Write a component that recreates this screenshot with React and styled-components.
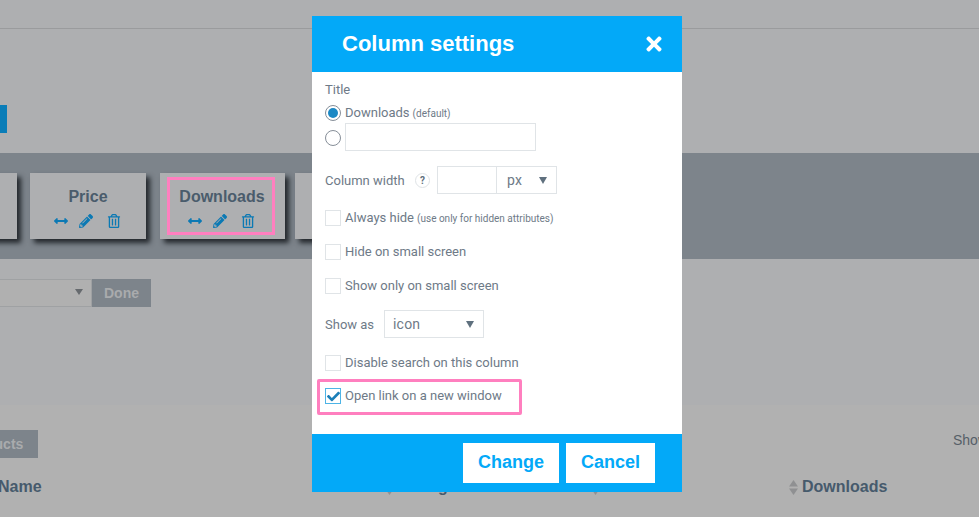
import React from 'react'
import styled, { createGlobalStyle } from 'styled-components'
import { FaArrowsAltH, FaPencilAlt, FaRegTrashAlt, FaTimes, FaCheck } from 'react-icons/fa'

const GlobalStyle = createGlobalStyle`
  html, body {
    margin: 0;
    padding: 0;
    background: #aeafb1;
  }
  * {
    box-sizing: border-box;
  }
`

const Page = styled.div`
  position: relative;
  width: 979px;
  height: 517px;
  overflow: hidden;
  background: #aeafb1;
  font-family: "Liberation Sans", Arial, sans-serif;
`

const TopBar = styled.div`
  height: 29px;
  border-bottom: 1px solid #9a9b9d;
`

const ActionRow = styled.div`
  height: 124px;
  padding-top: 76px;
`

const BlueTab = styled.div`
  width: 7px;
  height: 28px;
  background: #0a7db8;
`

const Band = styled.div`
  display: flex;
  height: 106px;
  padding: 20px 0;
  background: #7d848b;
`

const Card = styled.div`
  flex: none;
  width: ${p => p.$width}px;
  margin-left: ${p => p.$offset}px;
  height: 66px;
  padding: 4px 7px;
  background: #aeafb1;
  box-shadow: 4px 4px 5px rgba(20, 24, 28, 0.85);
`

const CardInner = styled.div`
  width: ${p => (p.$marked ? '108px' : '100%')};
  height: 58px;
  padding-top: ${p => (p.$marked ? 5 : 8)}px;
  padding-left: ${p => (p.$marked ? 2 : 0)}px;
  border: ${p => (p.$marked ? '3px solid #ff7fbf' : 'none')};
  text-align: center;
`

const CardTitle = styled.div`
  font-size: 16px;
  font-weight: bold;
  line-height: 24px;
  color: #4a5c6c;
`

const CardIcons = styled.div`
  display: flex;
  justify-content: center;
  align-items: center;
  gap: 11px;
  height: 16px;
  margin: 4px 2px 0 0;
  color: #0b79b4;
  font-size: 14px;

  svg:last-child {
    margin-left: 3px;
  }
`

const DoneRow = styled.div`
  display: flex;
  height: 146px;
  padding-top: 20px;
`

const DimSelect = styled.div`
  position: relative;
  width: 92px;
  height: 28px;
  background: #b0b0b0;
  border: 1px solid #9fa1a3;
  border-left: none;
`

const DimCaret = styled.span`
  position: absolute;
  right: 8px;
  top: 9px;
  width: 0;
  height: 0;
  border-left: 4px solid transparent;
  border-right: 4px solid transparent;
  border-top: 6px solid #666a6e;
`

const DimButton = styled.div`
  display: flex;
  align-items: center;
  justify-content: center;
  flex: none;
  width: ${p => p.$width}px;
  height: 28px;
  margin-left: ${p => p.$offset || 0}px;
  background: #7d848b;
  color: #a9abad;
  font-size: 14px;
  font-weight: bold;
`

const Lower = styled.div`
  height: 112px;
  padding-top: 25px;
  background: #b1b1b1;
`

const Toolbar = styled.div`
  display: flex;
  justify-content: space-between;
  height: 28px;
`

const ShowLabel = styled.div`
  flex: none;
  width: 26px;
  overflow: hidden;
  font-size: 14px;
  line-height: 20px;
  color: #565f68;
`

const HeadRow = styled.div`
  display: grid;
  grid-template-columns: 385px 206px 198px 1fr;
  height: 48px;
  margin-top: 20px;
  border-bottom: 2px solid #939b9a;
`

const HeadCell = styled.div`
  display: flex;
  align-items: flex-start;
  gap: 4px;
  height: 18px;
  margin-left: ${p => p.$offset || 0}px;
  font-size: 16px;
  font-weight: bold;
  line-height: 18px;
  color: #465a6c;
`

const Sort = styled.svg`
  flex: none;
  width: 9px;
  height: 15px;
  margin-top: 2px;
  fill: #8f9092;
`

const Modal = styled.div`
  position: absolute;
  left: 312px;
  top: 16px;
  display: flex;
  flex-direction: column;
  width: 370px;
  height: 476px;
  background: #fff;
  font-family: Roboto, "Liberation Sans", sans-serif;
  font-size: 13px;
  color: #6e7a87;
`

const ModalHeader = styled.div`
  display: flex;
  align-items: center;
  justify-content: space-between;
  flex: none;
  height: 56px;
  padding: 0 17px 0 30px;
  background: #03a9f8;
  color: #fff;
`

const ModalTitle = styled.div`
  font-family: "Liberation Sans", Arial, sans-serif;
  font-size: 22px;
  font-weight: bold;
`

const CloseIcon = styled(FaTimes)`
  font-size: 22px;
`

const ModalBody = styled.div`
  flex: 1;
  padding: 9px 13px 0;
`

const FieldTitle = styled.div`
  height: 17px;
  line-height: 17px;
`

const RadioRow = styled.div`
  display: flex;
  align-items: center;
  gap: 4px;
  height: ${p => p.$height}px;
  margin-top: ${p => p.$top}px;
`

const Radio = styled.span`
  display: flex;
  align-items: center;
  justify-content: center;
  flex: none;
  width: 16px;
  height: 16px;
  margin-top: ${p => (p.$low ? 2 : 0)}px;
  border: 1px solid #868e98;
  border-radius: 50%;

  &::after {
    content: '';
    display: ${p => (p.$checked ? 'block' : 'none')};
    width: 10px;
    height: 10px;
    border-radius: 50%;
    background: #1c88c4;
  }
`

// the option text sits a pixel above the middle of its box
const OptionText = styled.span`
  margin-top: -2px;
`

const Small = styled.span`
  margin-left: 3px;
  font-size: 10px;
`

const TextInput = styled.div`
  flex: none;
  width: ${p => p.$width}px;
  height: 28px;
  border: 1px solid #e0e4e7;
`

const WidthRow = styled.div`
  display: flex;
  align-items: center;
  height: 28px;
  margin-top: 15px;
`

const RowLabel = styled.span`
  flex: none;
  width: ${p => p.$width}px;
`

const Help = styled.span`
  display: flex;
  align-items: center;
  justify-content: center;
  flex: none;
  width: 15px;
  height: 15px;
  margin-right: 7px;
  border: 1px solid #dfe3e6;
  border-radius: 50%;
  font-size: 10px;
  font-weight: bold;
  color: #5e6e7c;
`

const Select = styled.div`
  display: flex;
  align-items: center;
  justify-content: space-between;
  flex: none;
  width: ${p => p.$width}px;
  height: 28px;
  padding: 0 9px 0 ${p => (p.$joined ? 10 : 8)}px;
  border: 1px solid #e0e4e7;
  border-left-width: ${p => (p.$joined ? 0 : 1)}px;
  font-size: 14px;
  letter-spacing: 0.2px;
`

const Caret = styled.span`
  width: 0;
  height: 0;
  border-left: 4px solid transparent;
  border-right: 4px solid transparent;
  border-top: 7px solid #5f707e;
`

const CheckRow = styled.div`
  display: flex;
  align-items: center;
  gap: 4px;
  height: 16px;
  margin-top: ${p => p.$top}px;
`

const Box = styled.span`
  position: relative;
  flex: none;
  width: 16px;
  height: 16px;
  border: 1px solid ${p => (p.$checked ? '#4db4e6' : '#e0e4e7')};
`

const Tick = styled(FaCheck)`
  position: absolute;
  left: 1px;
  top: 1px;
  font-size: 13px;
  color: #1c7fb8;
`

const ShowAsRow = styled.div`
  display: flex;
  align-items: center;
  height: 28px;
  margin-top: 16px;
`

const Marked = styled.div`
  display: flex;
  align-items: center;
  gap: 4px;
  width: 205px;
  height: 36px;
  margin: 8px 0 0 -8px;
  padding: 0 0 2px 5px;
  border: 3px solid #ff7fbf;
  border-radius: 2px;
`

const ModalFooter = styled.div`
  display: flex;
  justify-content: flex-end;
  gap: 7px;
  flex: none;
  height: 58px;
  padding: 9px 27px 0 0;
  background: #03a9f8;
`

const FooterButton = styled.button`
  width: ${p => p.$width}px;
  height: 40px;
  padding: 0 0 2px;
  border: none;
  background: #fff;
  color: #03a9f8;
  font-family: "Liberation Sans", Arial, sans-serif;
  font-size: 18px;
  font-weight: bold;
`

const columns = [
  { title: '', width: 117, offset: -100 },
  { title: 'Price', width: 116, offset: 13 },
  { title: 'Downloads', width: 125, offset: 14, marked: true },
  { title: 'Rating', width: 120, offset: 10 },
]

function SortIcon() {
  return (
    <Sort viewBox="0 0 9 15">
      <path d="M4.5 0 9 6.5H0z" />
      <path d="M4.5 15 0 8.5h9z" />
    </Sort>
  )
}

function App() {
  return (
    <Page>
      <GlobalStyle />
      <TopBar />
      <ActionRow>
        <BlueTab />
      </ActionRow>
      <Band>
        {columns.map(col => (
          <Card key={col.offset + col.width} $width={col.width} $offset={col.offset}>
            {col.title && (
              <CardInner $marked={col.marked}>
                <CardTitle>{col.title}</CardTitle>
                <CardIcons>
                  <FaArrowsAltH />
                  <FaPencilAlt />
                  <FaRegTrashAlt />
                </CardIcons>
              </CardInner>
            )}
          </Card>
        ))}
      </Band>
      <DoneRow>
        <DimSelect>
          <DimCaret />
        </DimSelect>
        <DimButton $width={59}>Done</DimButton>
      </DoneRow>
      <Lower>
        <Toolbar>
          <DimButton $width={90} $offset={-52}>Products</DimButton>
          <ShowLabel>Show</ShowLabel>
        </Toolbar>
        <HeadRow>
          <HeadCell $offset={-2}>Name</HeadCell>
          <HeadCell><SortIcon />Rating</HeadCell>
          <HeadCell><SortIcon />Price</HeadCell>
          <HeadCell><SortIcon />Downloads</HeadCell>
        </HeadRow>
      </Lower>

      <Modal>
        <ModalHeader>
          <ModalTitle>Column settings</ModalTitle>
          <CloseIcon />
        </ModalHeader>
        <ModalBody>
          <FieldTitle>Title</FieldTitle>
          <RadioRow $height={16} $top={7}>
            <Radio $checked />
            <OptionText>Downloads<Small>(default)</Small></OptionText>
          </RadioRow>
          <RadioRow $height={28} $top={2}>
            <Radio $low />
            <TextInput $width={191} />
          </RadioRow>
          <WidthRow>
            <RowLabel $width={90}>Column width</RowLabel>
            <Help>?</Help>
            <TextInput $width={60} />
            <Select $width={60} $joined>px<Caret /></Select>
          </WidthRow>
          <CheckRow $top={16}>
            <Box />
            <OptionText>Always hide<Small>(use only for hidden attributes)</Small></OptionText>
          </CheckRow>
          <CheckRow $top={18}>
            <Box />
            <OptionText>Hide on small screen</OptionText>
          </CheckRow>
          <CheckRow $top={18}>
            <Box />
            <OptionText>Show only on small screen</OptionText>
          </CheckRow>
          <ShowAsRow>
            <RowLabel $width={59}>Show as</RowLabel>
            <Select $width={100}>icon<Caret /></Select>
          </ShowAsRow>
          <CheckRow $top={17}>
            <Box />
            <OptionText>Disable search on this column</OptionText>
          </CheckRow>
          <Marked>
            <Box $checked>
              <Tick />
            </Box>
            <OptionText>Open link on a new window</OptionText>
          </Marked>
        </ModalBody>
        <ModalFooter>
          <FooterButton $width={96}>Change</FooterButton>
          <FooterButton $width={89}>Cancel</FooterButton>
        </ModalFooter>
      </Modal>
    </Page>
  )
}

export default App
